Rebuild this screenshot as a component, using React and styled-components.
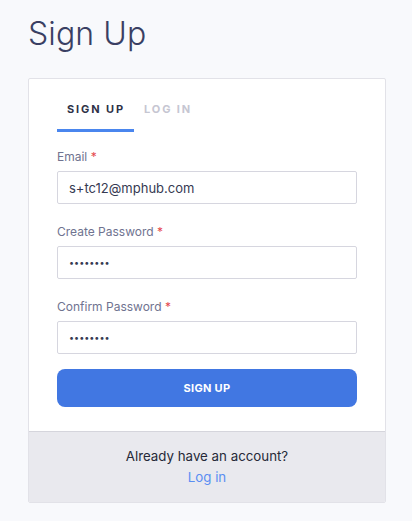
import React from "react";
import styled, { createGlobalStyle } from "styled-components";

const Global = createGlobalStyle`
  html, body { margin: 0; padding: 0; background: #f8f9fc; }
  body { font-family: Inter, "Noto Sans", sans-serif; }
  * { box-sizing: border-box; }
`;

const Page = styled.div`
  padding: 11px 26px 0 28px;
  width: 412px;
`;

const Title = styled.h1`
  margin: 0 0 21px 0;
  font-size: 32px;
  font-weight: 300;
  color: #3a3f63;
  line-height: 46px;
  letter-spacing: 0.1px;
`;

const Card = styled.div`
  width: 358px;
  background: #fff;
  border: 1px solid #e2e2e8;
  border-radius: 2px;
  overflow: hidden;
`;

const Body = styled.div`
  padding: 20px 28px 24px 28px;
`;

const Tabs = styled.div`
  display: flex;
  margin-bottom: 17px;
`;

const Tab = styled.div`
  padding: 2px 9px 12px 10px;
  font-size: 11px;
  font-weight: 700;
  letter-spacing: 1.9px;
  color: ${(p) => (p.$active ? "#2e3247" : "#c6c6d2")};
  border-bottom: 3px solid ${(p) => (p.$active ? "#4a86ee" : "transparent")};
  line-height: 16px;
`;

const Field = styled.div`
  display: flex;
  flex-direction: column;
  margin-bottom: 20px;
`;

const Label = styled.label`
  font-size: 12px;
  color: #6f7390;
  line-height: 16px;
  margin-bottom: 6px;
  span { color: #e5484d; }
`;

const Input = styled.input`
  width: 300px;
  height: 33px;
  border: 1px solid #d6d6df;
  border-radius: 2px;
  padding: 0 11px;
  font-family: Inter, "Noto Sans", sans-serif;
  font-size: ${(p) => (p.type === "password" ? "9px" : "13px")};
  color: #363a52;
  outline: none;
  background: #fff;
`;

const Button = styled.button`
  width: 300px;
  height: 38px;
  margin-top: -5px;
  border: none;
  border-radius: 8px;
  background: #4177e2;
  color: #fff;
  font-family: Inter, "Noto Sans", sans-serif;
  font-size: 11px;
  font-weight: 700;
  letter-spacing: 0.3px;
`;

const Footer = styled.div`
  background: #e9e9ee;
  border-top: 1px solid #d5d5dc;
  padding: 15px 0 15px 0;
  display: flex;
  flex-direction: column;
  align-items: center;
  gap: 2px;
`;

const FooterText = styled.div`
  font-size: 13.3px;
  color: #262938;
  line-height: 19px;
`;

const FooterLink = styled.a`
  font-size: 13.3px;
  color: #5a8ef2;
  line-height: 19px;
  text-decoration: none;
`;

export default function App() {
  return (
    <>
      <Global />
      <Page>
        <Title>Sign Up</Title>
        <Card>
          <Body>
            <Tabs>
              <Tab $active>SIGN UP</Tab>
              <Tab>LOG IN</Tab>
            </Tabs>
            <Field>
              <Label>Email <span>*</span></Label>
              <Input defaultValue="s+tc12@mphub.com" />
            </Field>
            <Field>
              <Label>Create Password <span>*</span></Label>
              <Input type="password" defaultValue="password" />
            </Field>
            <Field>
              <Label>Confirm Password <span>*</span></Label>
              <Input type="password" defaultValue="password" />
            </Field>
            <Button>SIGN UP</Button>
          </Body>
          <Footer>
            <FooterText>Already have an account?</FooterText>
            <FooterLink href="#">Log in</FooterLink>
          </Footer>
        </Card>
      </Page>
    </>
  );
}
